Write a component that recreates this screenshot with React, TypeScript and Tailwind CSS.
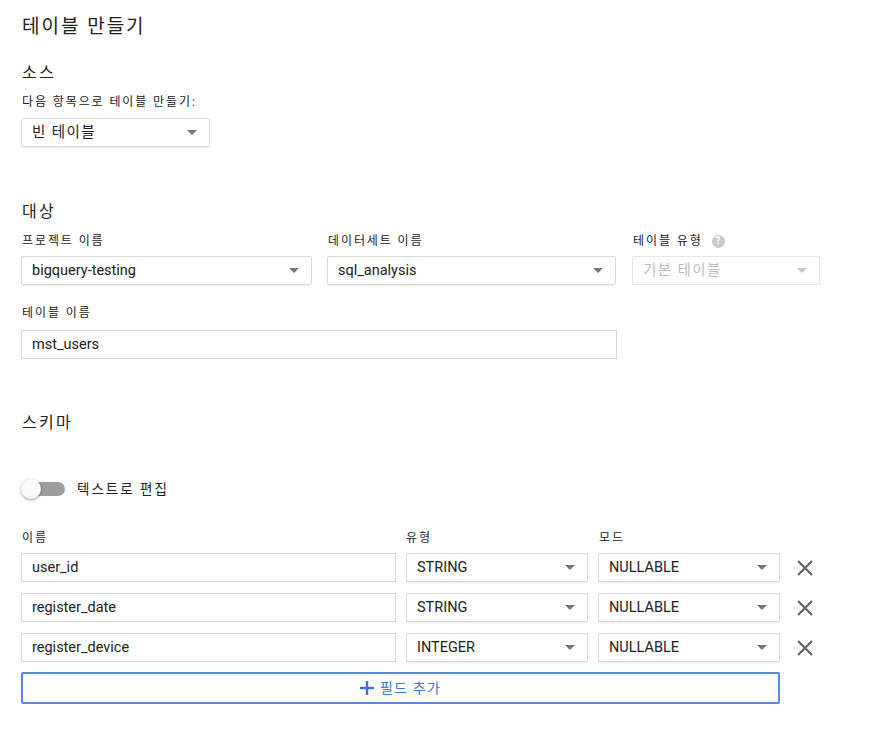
import React from "react";

const font = { fontFamily: "Roboto, 'Noto Sans CJK KR', sans-serif" };

const Arrow = ({ disabled }: { disabled?: boolean }) => (
  <svg width="10" height="5" viewBox="0 0 10 5" className="shrink-0">
    <path d="M0 0h10L5 5z" fill={disabled ? "#c4c4c4" : "#757575"} />
  </svg>
);

const Select = ({
  value,
  className = "",
  disabled,
  ko,
}: {
  value: string;
  className?: string;
  disabled?: boolean;
  ko?: boolean;
}) => (
  <div
    className={`flex h-[29px] items-center justify-between rounded-[2px] border pl-[10px] pr-[12px] text-[14.5px] ${
      disabled
        ? "border-[#e6e6e6] text-[#bdbdbd]"
        : "border-[#dadada] text-[#212121] shadow-[0_1px_1px_rgba(0,0,0,0.08)]"
    } ${className}`}
  >
    <span className={ko ? "tracking-[1.4px]" : ""}>{value}</span>
    <Arrow disabled={disabled} />
  </div>
);

const Input = ({ value, className = "" }: { value: string; className?: string }) => (
  <div
    className={`flex h-[29px] items-center border border-[#d6d6d6] pl-[10px] text-[14.5px] text-[#212121] ${className}`}
  >
    {value}
  </div>
);

const Label = ({ children, className = "" }: { children: React.ReactNode; className?: string }) => (
  <div className={`flex h-4 items-center text-[12px] leading-4 tracking-[1.9px] text-[#212121] ${className}`}>
    {children}
  </div>
);

const Heading = ({ children, className = "" }: { children: React.ReactNode; className?: string }) => (
  <h2 className={`h-5 pl-px text-[16px] leading-5 tracking-[2.3px] text-[#212121] ${className}`}>{children}</h2>
);

const rows = [
  { name: "user_id", type: "STRING" },
  { name: "register_date", type: "STRING" },
  { name: "register_device", type: "INTEGER" },
];

export default function App() {
  return (
    <div className="min-h-[732px] w-[878px] bg-white pl-[21px] pt-[15px]" style={font}>
      <h1 className="h-6 pl-px text-[19px] leading-6 tracking-[2px] text-[#212121]">테이블 만들기</h1>

      <Heading className="mt-6">소스</Heading>
      <Label className="mt-[11px] pl-px">다음 항목으로 테이블 만들기:</Label>
      <Select value="빈 테이블" className="mt-2 w-[189px]" ko />

      <Heading className="mt-[55px]">대상</Heading>
      <div className="mt-[11px] flex">
        <div className="w-[291px]">
          <Label className="pl-px">프로젝트 이름</Label>
          <Select value="bigquery-testing" className="mt-[7px]" />
        </div>
        <div className="ml-[15px] w-[289px]">
          <Label className="pl-px">데이터세트 이름</Label>
          <Select value="sql_analysis" className="mt-[7px]" />
        </div>
        <div className="ml-[16px] w-[188px]">
          <Label className="pl-px">
            테이블 유형
            <span className="ml-[9px] flex h-[13px] w-[13px] items-center justify-center rounded-full bg-[#c8c8c8] text-[10px] font-bold leading-none tracking-normal text-white">
              ?
            </span>
          </Label>
          <Select value="기본 테이블" className="mt-[7px]" disabled ko />
        </div>
      </div>

      <Label className="mt-[20px] pl-px">테이블 이름</Label>
      <Input value="mst_users" className="mt-[9px] w-[596px]" />

      <Heading className="mt-[54px]">스키마</Heading>

      <div className="mt-[46px] flex h-5 items-center">
        <div className="relative h-5 w-[45px]">
          <div className="absolute left-[9px] top-[3px] h-[14px] w-[35px] rounded-full bg-[#9e9e9e]" />
          <div className="absolute left-0 top-0 h-5 w-5 rounded-full bg-[#fafafa] shadow-[0_1px_3px_rgba(0,0,0,0.4)]" />
        </div>
        <span className="ml-[11px] text-[13.5px] tracking-[2px] text-[#212121]">텍스트로 편집</span>
      </div>

      <div className="mt-[31px] flex">
        <Label className="w-[385px] pl-px">이름</Label>
        <Label className="w-[193px]">유형</Label>
        <Label>모드</Label>
      </div>

      <div className="mt-[7px] flex flex-col gap-[11px]">
        {rows.map((r) => (
          <div key={r.name} className="flex items-center">
            <Input value={r.name} className="w-[375px]" />
            <Select value={r.type} className="ml-[10px] w-[182px]" />
            <Select value="NULLABLE" className="ml-[10px] w-[182px]" />
            <svg width="18" height="18" viewBox="0 0 18 18" className="ml-[16px]">
              <path d="M2 2L16 16M16 2L2 16" stroke="#616161" strokeWidth="2.2" />
            </svg>
          </div>
        ))}
      </div>

      <button className="mt-[10px] flex h-[32px] w-[759px] items-center justify-center rounded-[2px] border-2 border-[#5b86d9] text-[14px] text-[#3f74d8]">
        <svg width="14" height="14" viewBox="0 0 14 14" className="mr-[6px]">
          <path d="M7 0v14M0 7h14" stroke="#3f74d8" strokeWidth="2.4" />
        </svg>
        <span className="tracking-[1.2px]">필드 추가</span>
      </button>
    </div>
  );
}
